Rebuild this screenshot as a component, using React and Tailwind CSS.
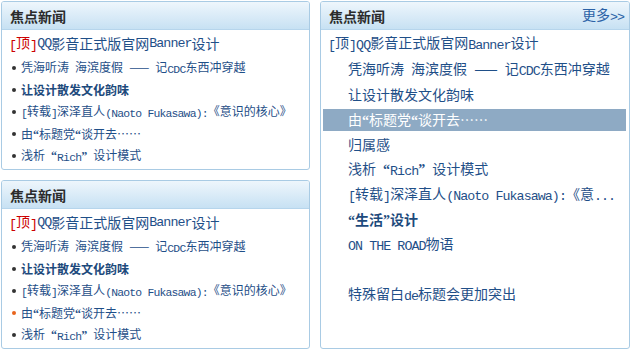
import React from "react";

function T({ s }) {
  const parts = s.split(/([\x20-\x7e]+|[“”]+)/);
  return parts.map((p, i) => {
    if (i % 2 === 0) return <React.Fragment key={i}>{p}</React.Fragment>;
    if (/[“”]/.test(p))
      return (
        <span key={i} className="font-['Liberation_Serif',serif] font-bold">
          {p}
        </span>
      );
    return (
      <span
        key={i}
        className="font-['Liberation_Mono',monospace] text-[0.95em] tracking-[-0.07em] whitespace-pre relative top-[0.07em]"
      >
        {p}
      </span>
    );
  });
}

function Panel({ more, className, children }) {
  return (
    <div className={"flex flex-col border border-[#a9cbe4] rounded-[3px] bg-white overflow-hidden " + className}>
      <div className="h-[28px] shrink-0 border-b border-[#b6d5ec] bg-linear-to-b from-[#eef6fc] to-[#c7e1f3] flex items-center justify-between pl-[8px] pr-[5px]">
        <span className="text-[14px] font-bold text-[#2b2b2b] leading-none">焦点新闻</span>
        {more && (
          <span className="text-[14px] text-[#2b62a6] leading-none">
            <T s="更多>>" />
          </span>
        )}
      </div>
      {children}
    </div>
  );
}

const leftItems = [
  { t: "凭海听涛 海滨度假 —— 记CDC东西冲穿越" },
  { t: "让设计散发文化韵味", bold: true },
  { t: "[转载]深泽直人(Naoto Fukasawa):《意识的核心》" },
  { t: "由“标题党“谈开去……" },
  { t: "浅析 “Rich” 设计模式" },
];

function LeftPanel({ orangeIndex }) {
  return (
    <Panel className="h-[169px]">
      <div className="h-[27px] flex items-center pl-[7px] text-[14px] text-[#1f4f88] whitespace-nowrap">
        <span className="text-[#cc0000]">
          <T s="[" />顶<T s="]" />
        </span>
        <T s="QQ影音正式版官网Banner设计" />
      </div>
      {leftItems.map((it, i) => (
        <div key={i} className="h-[22px] flex items-center pl-[10px] text-[12px]">
          <span
            className={
              "w-[4px] h-[4px] rounded-full mr-[5px] shrink-0 " +
              (i === orangeIndex ? "bg-[#e8641c]" : "bg-[#333333]")
            }
          />
          <span className={"whitespace-nowrap " + (it.bold ? "font-bold text-[#1d4a7c]" : "text-[#1f4f88]")}>
            <T s={it.t} />
          </span>
        </div>
      ))}
    </Panel>
  );
}

const rightItems = [
  { t: "凭海听涛 海滨度假 —— 记CDC东西冲穿越" },
  { t: "让设计散发文化韵味" },
  { t: "由“标题党“谈开去……", hl: true },
  { t: "归属感" },
  { t: "浅析 “Rich” 设计模式" },
  { t: "[转载]深泽直人(Naoto Fukasawa):《意..." },
  { t: "“生活”设计", bold: true },
  { t: "ON THE ROAD物语" },
  { t: "" },
  { t: "特殊留白de标题会更加突出" },
];

export default function App() {
  return (
    <div className="w-[630px] h-[350px] bg-white pt-[1px] pl-[1px] flex gap-[10px] font-['Noto_Sans_CJK_SC',sans-serif]">
      <div className="w-[309px] flex flex-col gap-[10px]">
        <LeftPanel orangeIndex={-1} />
        <LeftPanel orangeIndex={3} />
      </div>
      <Panel more className="w-[310px] h-[348px]">
        <div className="h-[27px] flex items-center pl-[7px] text-[14px] text-[#1f4f88] whitespace-nowrap">
          <span>
            <T s="[" />顶<T s="]QQ影音正式版官网Banner设计" />
          </span>
        </div>
        {rightItems.map((it, i) => (
          <div key={i} className="h-[25px] flex items-center">
            {it.hl ? (
              <div className="h-[22px] flex-1 ml-[2px] mr-[3px] bg-[#8eaac4] flex items-center pl-[25px] text-[14px] text-white whitespace-nowrap">
                <span>
                  <T s={it.t} />
                </span>
              </div>
            ) : (
              <div
                className={
                  "pl-[27px] text-[14px] whitespace-nowrap " +
                  (it.bold ? "font-bold text-[#1d4a7c]" : "text-[#1f4f88]")
                }
              >
                <T s={it.t} />
              </div>
            )}
          </div>
        ))}
      </Panel>
    </div>
  );
}
